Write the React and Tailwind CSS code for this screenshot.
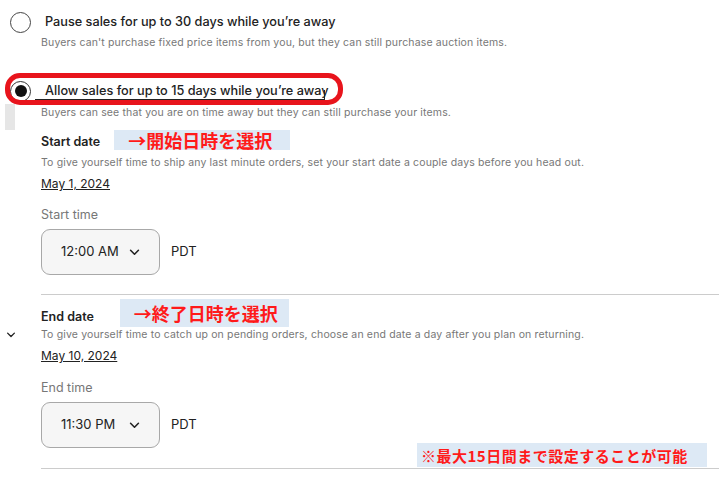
import React from "react";

const Chevron = ({ className }) => (
  <svg viewBox="0 0 12 8" className={className} fill="none" stroke="currentColor" strokeWidth="1.8" strokeLinecap="round" strokeLinejoin="round">
    <path d="M1.5 1.5 L6 6 L10.5 1.5" />
  </svg>
);

const Note = ({ children, className }) => (
  <div
    className={`bg-[#dde9f5] text-[#ff1a1a] font-bold leading-none flex items-center ${className}`}
    style={{ fontFamily: '"Noto Sans CJK JP", sans-serif' }}
  >
    {children}
  </div>
);

const Sub = ({ children, className = "" }) => (
  <p className={`h-[12px] text-[10.5px] tracking-[0.15px] text-[#777] leading-[12px] whitespace-nowrap ${className}`}>{children}</p>
);

const TimeSelect = ({ value }) => (
  <div className="flex items-center">
    <div className="w-[119px] h-[46px] rounded-[9px] border border-[#a8a8a8] bg-[#f6f6f6] flex items-center pl-[19px] pr-[19px] justify-between">
      <span className="text-[13px] text-[#222]">{value}</span>
      <Chevron className="w-[11px] h-[7px] text-[#222]" />
    </div>
    <span className="ml-[11px] text-[13px] text-[#222]">PDT</span>
  </div>
);

const App = () => {
  return (
    <div className="w-[719px] h-[477px] bg-white overflow-hidden relative" style={{ fontFamily: 'Inter, "Open Sans", sans-serif' }}>
      {/* option 1 */}
      <div className="pt-[11px] pl-[10px]">
        <div className="flex items-center h-[22px]">
          <div className="w-[21px] h-[21px] rounded-full border-[1.5px] border-[#444]" />
          <span className="ml-[14px] text-[12.7px] font-medium text-[#222]">Pause sales for up to 30 days while you’re away</span>
        </div>
        <Sub className="ml-[31px] mt-[4px]">
          Buyers can't purchase fixed price items from you, but they can still purchase auction items.
        </Sub>
      </div>

      {/* option 2 */}
      <div className="pl-[10px] mt-[31px] relative">
        <div className="flex items-center h-[22px]">
          <div className="w-[21px] h-[21px] rounded-full border-[1.5px] border-[#333] flex items-center justify-center">
            <div className="w-[12px] h-[12px] rounded-full bg-[#111]" />
          </div>
          <span className="ml-[14px] text-[12.7px] font-medium text-[#222]">Allow sales for up to 15 days while you’re away</span>
        </div>
        <div className="absolute left-[35px] top-[10px] w-[290px] h-[10px] border-r border-b border-[#222]" />
        <div className="absolute left-[5px] top-[-7px] w-[338px] h-[32px] border-[5px] border-[#e8141c] rounded-[15px]" />
        <div className="absolute left-[5px] top-[24px] w-[10px] h-[26px] bg-[#e6e6e6]" />
        <Sub className="ml-[31px] mt-[5px]">
          Buyers can see that you are on time away but they can still purchase your items.
        </Sub>
      </div>

      {/* start */}
      <div className="pl-[41px]">
        <div className="flex items-start mt-[11px] h-[20px]">
          <span className="mt-[5px] h-[14px] leading-[14px] text-[12.5px] font-semibold text-[#222]">Start date</span>
          <Note className="ml-[14px] w-[176px] h-[20px] pl-[14px] text-[18px]">→開始日時を選択</Note>
        </div>
        <Sub className="mt-[7px]">
          To give yourself time to ship any last minute orders, set your start date a couple days before you head out.
        </Sub>
        <p className="mt-[8px] h-[14px] text-[12px] text-[#222] underline leading-[14px]">May 1, 2024</p>
        <p className="mt-[17px] h-[14px] text-[12.5px] text-[#777] leading-[14px]">Start time</p>
        <div className="mt-[7px]">
          <TimeSelect value="12:00 AM" />
        </div>
        <div className="mt-[19px] h-px bg-[#cccccc]" />
      </div>

      {/* end */}
      <div className="pl-[41px] relative">
        <Chevron className="absolute left-[6px] top-[33px] w-[10px] h-[6px] text-[#222]" />
        <div className="flex items-start mt-[4px] h-[28px]">
          <span className="mt-[11px] h-[14px] leading-[14px] text-[12.5px] font-semibold text-[#222]">End date</span>
          <Note className="ml-[26px] w-[169px] h-[28px] pl-[14px] text-[18px]">→終了日時を選択</Note>
        </div>
        <Sub className="mt-[2px]">
          To give yourself time to catch up on pending orders, choose an end date a day after you plan on returning.
        </Sub>
        <p className="mt-[8px] h-[14px] text-[12px] text-[#222] underline leading-[14px]">May 10, 2024</p>
        <p className="mt-[18px] h-[14px] text-[12.5px] text-[#777] leading-[14px]">End time</p>
        <div className="mt-[7px]">
          <TimeSelect value="11:30 PM" />
        </div>
        <Note className="absolute left-[417px] top-[144px] w-[290px] h-[24px] pl-[4px] text-[15px] tracking-[0.5px]">※最大15日間まで設定することが可能</Note>
        <div className="mt-[20px] h-px bg-[#cccccc]" />
      </div>
    </div>
  );
};

export default App;
